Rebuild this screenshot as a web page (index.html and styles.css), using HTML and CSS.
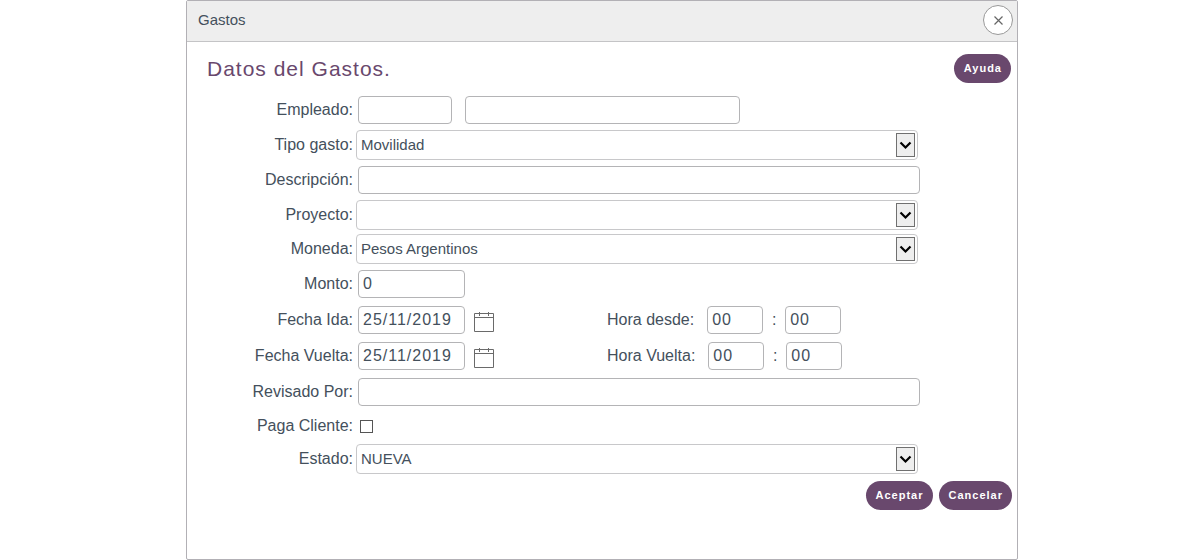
FILE: index.html
```html
<!DOCTYPE html>
<html lang="es">
<head>
<meta charset="utf-8">
<title>Gastos</title>
<link rel="stylesheet" href="styles.css">
</head>
<body>
<svg width="0" height="0" class="symbols" aria-hidden="true">
  <symbol id="chevron" viewBox="0 0 17 22"><path d="M3.500 8.500 8.500 13.500 13.500 8.500" fill="none" stroke="#000" stroke-width="2.200"/></symbol>
  <symbol id="calendar" viewBox="0 0 22 22"><path d="M1.500 3.500h19v18h-19zM1.500 7.500h19M6.500 2v4M15.500 2v4" fill="none" stroke="#6a6a6a"/></symbol>
</svg>
<main class="dialog" role="dialog" aria-labelledby="dialog-title">
  <header class="titlebar">
    <span id="dialog-title">Gastos</span>
    <button type="button" class="close" aria-label="Cerrar"><svg width="10" height="10" viewBox="0 0 10 10"><path d="M1.500 1.500l8 8M9.500 1.500l-8 8" stroke="#666" stroke-width="1.200"/></svg></button>
  </header>
  <form class="content">
    <div class="heading">
      <h1>Datos del Gastos.</h1>
      <button type="button" class="pill">Ayuda</button>
    </div>
    <div class="row">
      <label class="label" for="empleado">Empleado:</label>
      <div class="field"><input class="box code" type="text" id="empleado"><input class="box name" type="text" aria-label="Nombre del empleado"></div>
    </div>
    <div class="row tall">
      <label class="label" for="tipo">Tipo gasto:</label>
      <div class="select"><select id="tipo"><option>Movilidad</option></select><svg class="arrow"><use href="#chevron"/></svg></div>
    </div>
    <div class="row">
      <label class="label" for="descripcion">Descripción:</label>
      <div class="field"><input class="box wide" type="text" id="descripcion"></div>
    </div>
    <div class="row tall">
      <label class="label" for="proyecto">Proyecto:</label>
      <div class="select"><select id="proyecto"><option></option></select><svg class="arrow"><use href="#chevron"/></svg></div>
    </div>
    <div class="row short">
      <label class="label" for="moneda">Moneda:</label>
      <div class="select"><select id="moneda"><option>Pesos Argentinos</option></select><svg class="arrow"><use href="#chevron"/></svg></div>
    </div>
    <div class="group">
      <div class="row tall">
        <label class="label" for="monto">Monto:</label>
        <div class="field"><input class="box amount" type="text" id="monto" value="0"></div>
      </div>
      <div class="row tall">
        <label class="label" for="ida">Fecha Ida:</label>
        <div class="field">
          <input class="box amount" type="text" id="ida" value="25/11/2019">
          <button type="button" class="calendar" aria-label="Elegir fecha de ida"><svg width="22" height="22"><use href="#calendar"/></svg></button>
          <div class="time"><label for="desde">Hora desde:</label><input class="box hour" type="text" id="desde" value="00"><span>:</span><input class="box hour" type="text" aria-label="Minutos desde" value="00"></div>
        </div>
      </div>
      <div class="row tall">
        <label class="label" for="vuelta">Fecha Vuelta:</label>
        <div class="field">
          <input class="box amount" type="text" id="vuelta" value="25/11/2019">
          <button type="button" class="calendar" aria-label="Elegir fecha de vuelta"><svg width="22" height="22"><use href="#calendar"/></svg></button>
          <div class="time"><label for="hvuelta">Hora Vuelta:</label><input class="box hour" type="text" id="hvuelta" value="00"><span>:</span><input class="box hour" type="text" aria-label="Minutos vuelta" value="00"></div>
        </div>
      </div>
      <div class="row tall">
        <label class="label" for="revisado">Revisado Por:</label>
        <div class="field"><input class="box wide" type="text" id="revisado"></div>
      </div>
    </div>
    <div class="row short">
      <label class="label" for="paga">Paga Cliente:</label>
      <div class="field"><input class="check" type="checkbox" id="paga"></div>
    </div>
    <div class="row">
      <label class="label" for="estado">Estado:</label>
      <div class="select"><select id="estado"><option>NUEVA</option></select><svg class="arrow"><use href="#chevron"/></svg></div>
    </div>
    <div class="actions">
      <button type="submit" class="pill">Aceptar</button>
      <button type="button" class="pill">Cancelar</button>
    </div>
  </form>
</main>
</body>
</html>
```

FILE: styles.css
```css
* {
  box-sizing: border-box;
}

body {
  margin: 0;
  padding-left: 4px;
  background: #fff;
  color: #44505c;
  font: 16px/20px "Liberation Sans", Arial, sans-serif;
}

.symbols {
  position: absolute;
}

.dialog {
  display: flex;
  flex-direction: column;
  max-width: 832px;
  min-height: 100vh;
  margin: 0 auto;
  border: 1px solid #b2b0b5;
  border-radius: 2px;
}

.titlebar {
  display: flex;
  align-items: center;
  justify-content: space-between;
  padding: 4px 4px 6px 11px;
  border-bottom: 1px solid #c4c4c6;
  background: #eee;
  font-size: 15px;
  line-height: 20px;
}

.close {
  display: flex;
  align-items: center;
  justify-content: center;
  width: 30px;
  height: 30px;
  padding: 0;
  border: 1px solid #999;
  border-radius: 50%;
  background: #fff;
}

.content {
  padding: 12px 5px 12px 20px;
}

.heading {
  display: flex;
  align-items: center;
  justify-content: space-between;
  padding: 0 1px 10px 0;
}

h1 {
  margin: 0;
  color: #69486d;
  font-size: 21px;
  font-weight: normal;
  letter-spacing: 1px;
  line-height: 28px;
}

.pill {
  height: 29px;
  padding: 0 9px 1px 10px;
  border: 0;
  border-radius: 15px;
  background: #69486d;
  color: #fff;
  font: bold 11px "Liberation Sans", Arial, sans-serif;
  letter-spacing: 1px;
}

.row {
  display: flex;
  align-items: center;
  min-height: 34px;
}

.tall {
  min-height: 36px;
}

.short {
  min-height: 32px;
}

.group {
  padding-top: 1px;
}

.label {
  flex: none;
  width: 146px;
  margin-right: 3px;
  text-align: right;
}

.field {
  display: flex;
  flex: 1;
  align-items: center;
  padding-left: 2px;
}

.box {
  height: 28px;
  min-width: 0;
  padding: 0 4px;
  border: 1px solid #b4b4b6;
  border-radius: 4px;
  background: #fff;
  color: inherit;
  font: 16px "Liberation Sans", Arial, sans-serif;
  letter-spacing: 1px;
}

.code {
  width: 94px;
  margin-right: 13px;
}

.name {
  width: 275px;
}

.wide {
  width: 562px;
}

.amount {
  width: 107px;
}

.hour {
  width: 56px;
}

.select {
  position: relative;
  flex: 0 1 562px;
}

select {
  display: block;
  width: 100%;
  height: 30px;
  padding: 0 24px 2px 4px;
  border: 1px solid #c8c8ca;
  border-radius: 4px;
  appearance: none;
  background: #fff;
  color: inherit;
  font: 15px "Liberation Sans", Arial, sans-serif;
}

.arrow {
  position: absolute;
  top: 3px;
  right: 3px;
  width: 19px;
  height: 24px;
  border: 1px solid #707070;
  background: #eee;
  pointer-events: none;
}

.calendar {
  display: flex;
  margin: 2px 0 0 8px;
  padding: 0;
  border: 0;
  background: none;
}

.time {
  display: flex;
  align-items: center;
  margin-left: 112px;
}

.time label {
  margin-right: 13px;
}

.time span {
  width: 22px;
  text-align: center;
}

.check {
  width: 13px;
  height: 13px;
  margin: 0 2px;
  border: 1px solid #555;
  appearance: none;
  background: #fff;
}

.check:checked {
  background: #69486d;
}

.actions {
  display: flex;
  justify-content: flex-end;
  gap: 6px;
  padding-top: 5px;
}
```
